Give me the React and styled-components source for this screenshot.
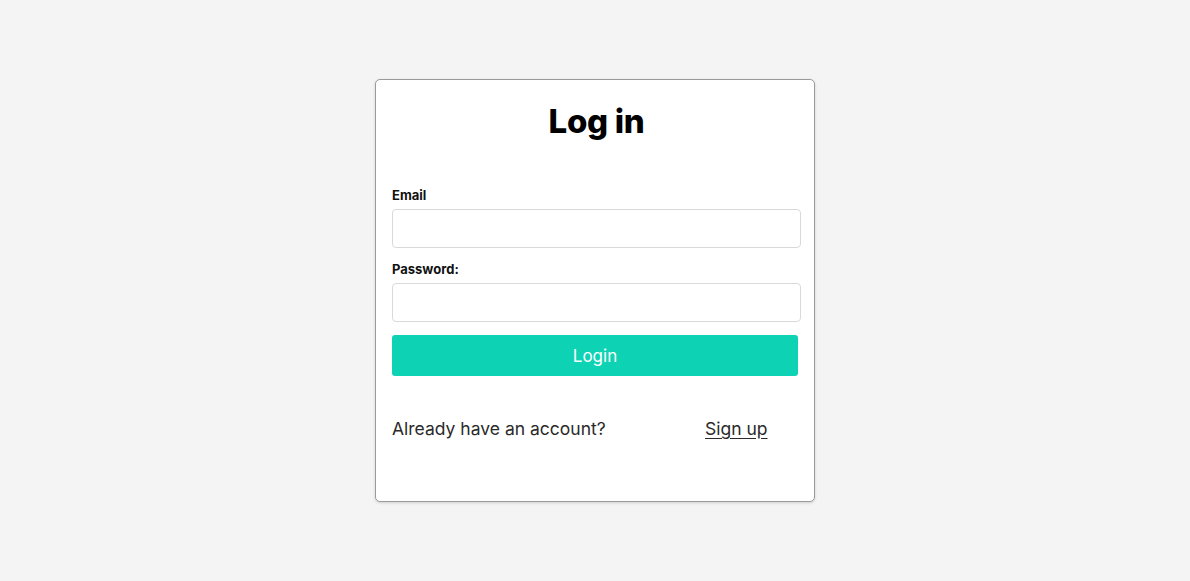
import React from "react";
import styled, { createGlobalStyle } from "styled-components";

const GlobalStyle = createGlobalStyle`
  * { box-sizing: border-box; }
  body {
    margin: 0;
    background: #f4f4f4;
    font-family: "Inter", "Noto Sans", sans-serif;
  }
`;

const Page = styled.div`
  min-height: 581px;
  display: flex;
  justify-content: center;
  padding-top: 79px;
`;

const Card = styled.form`
  width: 440px;
  height: 423px;
  background: #fff;
  border: 1px solid #9a9a9a;
  border-radius: 5px;
  box-shadow: 0 1px 3px rgba(0, 0, 0, 0.15);
  padding: 18px 13px 0 16px;
  display: flex;
  flex-direction: column;
`;

const Title = styled.h1`
  margin: 0 0 43px;
  text-align: center;
  font-size: 33px;
  font-weight: 800;
  color: #000;
  line-height: 46px;
  letter-spacing: -0.3px;
`;

const Label = styled.label`
  font-size: 13px;
  font-weight: 700;
  color: #111;
  line-height: 16px;
  margin-bottom: 6px;
`;

const Input = styled.input`
  width: 409px;
  height: 39px;
  border: 1px solid #d9d9d9;
  border-radius: 4px;
  margin-bottom: ${(p) => p.$gap}px;
  font-size: 15px;
  padding: 0 10px;
  outline: none;
`;

const Button = styled.button`
  width: 406px;
  height: 41px;
  border: none;
  border-radius: 3px;
  background: #0dd3b4;
  color: #fff;
  font-family: inherit;
  font-size: 17px;
  font-weight: 400;
  cursor: pointer;
`;

const Footer = styled.div`
  display: flex;
  align-items: center;
  margin-top: 41px;
  font-size: 17.5px;
  color: #2a2a2a;
  line-height: 24px;
`;

const Prompt = styled.span`
  width: 313px;
`;

const SignUp = styled.a`
  color: #2a2a2a;
  text-decoration: underline;
  text-underline-offset: 3px;
  cursor: pointer;
`;

export default function App() {
  return (
    <>
      <GlobalStyle />
      <Page>
        <Card onSubmit={(e) => e.preventDefault()}>
          <Title>Log in</Title>
          <Label>Email</Label>
          <Input type="email" $gap={13} />
          <Label>Password:</Label>
          <Input type="password" $gap={13} />
          <Button type="submit">Login</Button>
          <Footer>
            <Prompt>Already have an account?</Prompt>
            <SignUp>Sign up</SignUp>
          </Footer>
        </Card>
      </Page>
    </>
  );
}
